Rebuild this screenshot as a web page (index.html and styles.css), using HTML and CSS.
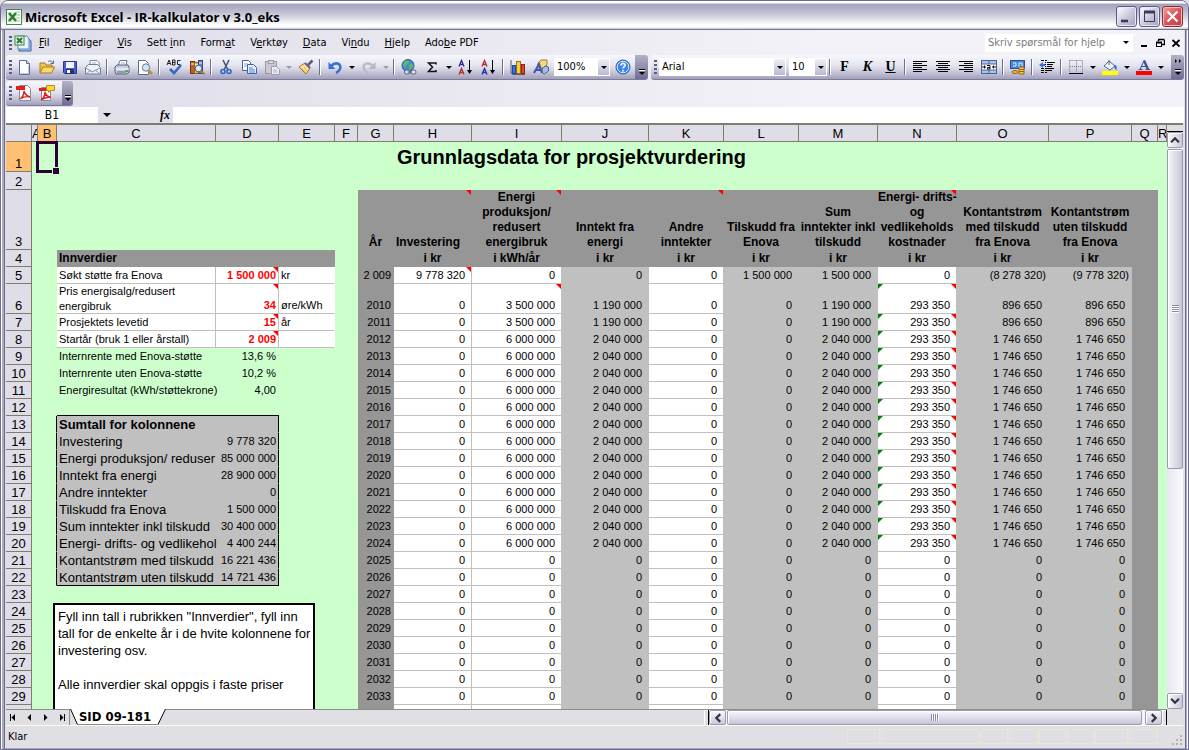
FILE: index.html
```
<!DOCTYPE html>
<html lang="no">
<head>
<meta charset="utf-8">
<title>Microsoft Excel - IR-kalkulator v 3.0_eks</title>
<link rel="stylesheet" href="styles.css">
</head>
<body>
<div class="window">
  <header class="titlebar">
    <svg class="i16" viewBox="0 0 16 16"><rect x=".5" y=".5" width="15" height="15" fill="#fff" stroke="#3b8a3e"/><path d="M10 3h4M10 6h4M10 9h4M10 12h4" stroke="#8cbf8c"/><rect x="2" y="3" width="9" height="10" fill="#d6efd3"/><path d="M3 4l7 8M10 4l-7 8" stroke="#2c7a35" stroke-width="2.4"/></svg>
    <h1 class="title">Microsoft Excel - IR-kalkulator v 3.0_eks</h1>
    <button class="wbtn" aria-label="Minimer"><svg viewBox="0 0 19 19"><path d="M4 14h7" stroke="#fff" stroke-width="4"/><path d="M4 14h7" stroke="#3b3a5c" stroke-width="3"/></svg></button>
    <button class="wbtn" aria-label="Maksimer"><svg viewBox="0 0 19 19"><path d="M4.500 5v9.500h10v-9.500" fill="none" stroke="#3b3a5c"/><path d="M4 5h11" stroke="#3b3a5c" stroke-width="3"/></svg></button>
    <button class="wbtn close" aria-label="Lukk"><svg viewBox="0 0 19 19"><path d="M4.500 4.500l10 10M14.500 4.500l-10 10" stroke="#fff" stroke-width="2.200"/></svg></button>
  </header>

  <nav class="menubar">
    <span class="grip"></span>
    <svg class="docicon" viewBox="0 0 18 18"><path d="M5 4h9l3 3v10H5z" fill="#a9c6ef" stroke="#35639e"/><path d="M4 2h9l2 3v10H4z" fill="#e8f1fd" stroke="#5d8ac4"/><rect x="1" y="2" width="9" height="9" fill="#e1f3dc" stroke="#3b8a3e"/><path d="M3 4l5 5M8 4l-5 5" stroke="#2c7a35" stroke-width="2"/></svg>
    <div class="menus">
      <button><u>F</u>il</button><button><u>R</u>ediger</button><button><u>V</u>is</button><button>Sett <u>i</u>nn</button><button>Form<u>a</u>t</button><button>V<u>e</u>rktøy</button><button><u>D</u>ata</button><button>Vi<u>n</u>du</button><button><u>H</u>jelp</button><button>Ado<u>b</u>e PDF</button>
    </div>
    <div class="ask"><input aria-label="Skriv spørsmål for hjelp" placeholder="Skriv spørsmål for hjelp"><span class="caret"></span></div>
    <div class="docbtns">
      <button aria-label="Minimer bok"><svg viewBox="0 0 10 10"><path d="M2 8h6" stroke="#000" stroke-width="2"/></svg></button>
      <button aria-label="Gjenopprett bok"><svg viewBox="0 0 10 10"><path d="M3 1.500h6.500M3.500 2v1M9.500 2v4.500H7" fill="none" stroke="#000" stroke-width="1.500"/><rect x="1.500" y="4.500" width="5" height="4" fill="none" stroke="#000"/><path d="M1 4.500h6" stroke="#000" stroke-width="2"/></svg></button>
      <button aria-label="Lukk bok"><svg viewBox="0 0 10 10"><path d="M1.500 2l7 6.500M8.500 2l-7 6.500" stroke="#000" stroke-width="1.800"/></svg></button>
    </div>
  </nav>

  <div class="toolrow">
    <div class="toolbar standard">
      <span class="grip"></span>
      <button aria-label="Ny"><svg viewBox="0 0 16 16"><path d="M3.500 1.500h7l3 3v11h-10z" fill="#fff" stroke="#5d6e94"/><path d="M10.500 1.500v3h3" fill="#cfdcf0" stroke="#5d6e94"/><path d="M12.500 6v8.500h-8" fill="none" stroke="#b9cbe9"/></svg></button>
      <button aria-label="Åpne"><svg viewBox="0 0 16 16"><path d="M1 14V4h5l1 2h6v3" fill="#f3c64f" stroke="#a97a1c"/><path d="M1 14l3-6h11.500l-3 6z" fill="#fbd970" stroke="#a97a1c"/><path d="M9 3c2-2 4-1 5 1M14.500 1.500v3h-3" fill="none" stroke="#4669a6"/></svg></button>
      <button aria-label="Lagre"><svg viewBox="0 0 16 16"><path d="M1.500 2.500h13v12h-12l-1-1z" fill="#4b5fd0" stroke="#2a3490"/><rect x="4" y="3" width="8" height="6" fill="#eef3ff"/><rect x="4" y="10" width="8" height="5" fill="#27306f"/><rect x="5" y="11" width="3" height="3" fill="#fff"/></svg></button>
      <button aria-label="E-post"><svg viewBox="0 0 16 16"><path d="M5 9V1.500h7l2 2V9" fill="#fff" stroke="#7b88a6"/><path d="M7 4h4M7 6h5" stroke="#9db1d6"/><path d="M.5 8.500l3-3h9l3 3v6.500H.5z" fill="#eef2f9" stroke="#6f7ea0"/><path d="M1 9l6 4 8-4M1 15l5-4M15 15l-5-4" fill="none" stroke="#8793b1"/></svg></button>
      <i class="sep"></i>
      <button aria-label="Skriv ut"><svg viewBox="0 0 16 16"><path d="M4 7l2-5.500h7L12 7" fill="#fff" stroke="#6a7690"/><path d="M1 8l2-2h11l1 2v5l-2 2H2l-1-2z" fill="#c9d0df" stroke="#55617e"/><path d="M2 10h13" stroke="#fff"/><path d="M3 12h9v2H3z" fill="#8f9bb5"/><rect x="11" y="11" width="3" height="2" fill="#3fbb43"/><path d="M7 4h4" stroke="#9ab0d6"/></svg></button>
      <button aria-label="Forhåndsvis"><svg viewBox="0 0 16 16"><path d="M1.500 1.500h7l3 3v11h-10z" fill="#fff" stroke="#5d6e94"/><circle cx="9" cy="8.500" r="3.700" fill="#cfe5f8" stroke="#68788f"/><path d="M11.500 11.500l3.500 3.500" stroke="#c78b35" stroke-width="2.500"/></svg></button>
      <i class="sep"></i>
      <button aria-label="Stavekontroll"><svg viewBox="0 0 16 16"><path d="M1 6l2-5 2 5M2 4.500h2M6.500 1v5h2.500V1zM6.500 3.500h2.500M14.500 1.500h-3v4h3" fill="none" stroke="#222"/><path d="M4 10l4 4 7-8" fill="none" stroke="#3867c6" stroke-width="2.600"/></svg></button>
      <button aria-label="Oppslag"><svg viewBox="0 0 16 16"><rect x="1.500" y="2.500" width="4" height="12" fill="#c35c31" stroke="#703421"/><rect x="5.500" y="3.500" width="4" height="11" fill="#e7b940" stroke="#8b6714"/><rect x="9.500" y="1.500" width="4" height="13" fill="#6e7fc8" stroke="#34458c"/><path d="M2 5h3M6 6h3M10 4h3" stroke="#fff"/><circle cx="9.500" cy="9.500" r="3.300" fill="#d5edfa" stroke="#4e5f74"/><path d="M12 12l3.500 3.500" stroke="#b3772b" stroke-width="2.200"/></svg></button>
      <i class="sep"></i>
      <button aria-label="Klipp ut"><svg viewBox="0 0 16 16"><path d="M5 1l5 10M11 1L6 11" stroke="#44567e" stroke-width="1.600"/><circle cx="5" cy="12.500" r="2" fill="none" stroke="#2e64c8" stroke-width="1.600"/><circle cx="11" cy="12.500" r="2" fill="none" stroke="#2e64c8" stroke-width="1.600"/></svg></button>
      <button aria-label="Kopier"><svg viewBox="0 0 16 16"><path d="M1.500 1.500h6l2 2v8h-8z" fill="#fff" stroke="#3f64ae"/><path d="M3 5h4M3 7h4" stroke="#85a5dd"/><path d="M6.500 5.500h6l3 3v6h-9z" fill="#e7f0ff" stroke="#3f64ae"/><path d="M8 9h4M8 11h6M8 13h6" stroke="#5482ce"/></svg></button>
      <button aria-label="Lim inn"><svg viewBox="0 0 16 16"><rect x="1.500" y="2.500" width="11" height="12" fill="#c9c9d6" stroke="#9a9aae"/><rect x="4.500" y="1.500" width="5" height="3" fill="#dcdce6" stroke="#9a9aae"/><path d="M7.500 7.500h5l3 3v5h-8z" fill="#eeeef4" stroke="#9a9aae"/><path d="M9 11h4M9 13h5" stroke="#b0b0c2"/></svg></button>
      <span class="drop off"><i class="caret"></i></span>
      <button aria-label="Kopier format"><svg viewBox="0 0 16 16"><path d="M10 6l4.500-4.500" stroke="#56607a" stroke-width="2.500"/><path d="M1 8l6-4 5 5-4 6z" fill="#fbe49a" stroke="#9a7728"/><path d="M7 4l5 5" stroke="#6b5a8c" stroke-width="2"/><path d="M4 9l3 4M6 8l3 4" stroke="#dcb65c"/></svg></button>
      <i class="sep"></i>
      <button aria-label="Angre"><svg viewBox="0 0 16 16"><path d="M4 7c5-5 11-2 9 3-1 2-2 3-4 4" fill="none" stroke="#3a6fd8" stroke-width="2.600"/><path d="M1.500 3v7h7z" fill="#3a6fd8"/></svg></button>
      <span class="drop"><i class="caret"></i></span>
      <button aria-label="Gjør om"><svg viewBox="0 0 16 16"><path d="M12 7c-5-5-11-2-9 3 1 2 2 3 4 4" fill="none" stroke="#b7b7c6" stroke-width="2.200"/><path d="M14.500 3v7h-7z" fill="#b7b7c6"/></svg></button>
      <span class="drop off"><i class="caret"></i></span>
      <i class="sep"></i>
      <button aria-label="Hyperkobling"><svg viewBox="0 0 16 16"><circle cx="7" cy="6.500" r="6" fill="#4c87d8" stroke="#2c5aa0"/><path d="M3 3c2-2 5-2 5 0s-3 2-3 4-3 0-3-1zM9 5c2-1 4 1 3 3l-3 3c-2-1 0-3-1-4z" fill="#55bd54"/><rect x="3.500" y="11" width="5.500" height="4" rx="2" fill="#e6eaf3" stroke="#4d5d7b"/><rect x="9.500" y="11" width="5.500" height="4" rx="2" fill="#e6eaf3" stroke="#4d5d7b"/><path d="M6.500 13h5" stroke="#4d5d7b"/></svg></button>
      <button aria-label="Autosummer"><svg viewBox="0 0 16 16"><path d="M12 5.500V4H4.500L8.500 8l-4 4.500H12V11" fill="none" stroke="#111" stroke-width="1.500"/></svg></button>
      <span class="drop"><i class="caret"></i></span>
      <button aria-label="Sorter stigende"><svg viewBox="0 0 16 16"><path d="M1 7.500l2.500-6L6 7.500M2 5.500h3" fill="none" stroke="#2b2ba3" stroke-width="1.300"/><path d="M1 15.500l2.500-6L6 15.500M2 13.500h3" fill="none" stroke="#b22d2d" stroke-width="1.300"/><path d="M11.500 1v13" stroke="#000"/><path d="M9 11h5l-2.500 4z"/></svg></button>
      <button aria-label="Sorter synkende"><svg viewBox="0 0 16 16"><path d="M1 7.500l2.500-6L6 7.500M2 5.500h3" fill="none" stroke="#b22d2d" stroke-width="1.300"/><path d="M1 15.500l2.500-6L6 15.500M2 13.500h3" fill="none" stroke="#2b2ba3" stroke-width="1.300"/><path d="M11.500 1v13" stroke="#000"/><path d="M9 11h5l-2.500 4z"/></svg></button>
      <i class="sep"></i>
      <button aria-label="Diagramveiviser"><svg viewBox="0 0 16 16"><path d="M1 1v13l2 1.500h12" fill="none" stroke="#4a5a80"/><rect x="2.500" y="6.500" width="3" height="8" fill="#3c78dc" stroke="#1d4796"/><rect x="6.500" y="2.500" width="4" height="12" fill="#f8cb3f" stroke="#9a7110"/><rect x="11.500" y="5.500" width="3" height="9" fill="#e2482c" stroke="#8d2413"/></svg></button>
      <button aria-label="Tegning"><svg viewBox="0 0 16 16"><path d="M5 4l3-3h6v5l-3 3H5z" fill="#f4d77c" stroke="#a3822f"/><path d="M1 14l5-9 3 9M3 11h5" fill="none" stroke="#3e55b5" stroke-width="2"/><path d="M9 10l3-3 3.500 1v4l-4 3-2-1z" fill="#a9bbdf" stroke="#4e6191"/></svg></button>
      <div class="combo zoom"><select aria-label="Zoom"><option>100%</option></select><span class="cbtn"><i class="caret"></i></span></div>
      <button aria-label="Hjelp"><svg viewBox="0 0 16 16"><circle cx="8" cy="8" r="7" fill="#3c86e8" stroke="#2b5fb0"/><circle cx="8" cy="8" r="5.800" fill="none" stroke="#d9eafd"/><path d="M6 6.500c0-3 4.500-2.500 4 0-.3 1.300-2 1.300-2 3M8 11v1.500" fill="none" stroke="#fff" stroke-width="1.700"/></svg></button>
      <span class="tail"><i class="bar"></i><i class="caret"></i></span>
    </div>
    <div class="toolbar format">
      <span class="grip"></span>
      <div class="combo face"><select aria-label="Skrift"><option>Arial</option></select><span class="cbtn"><i class="caret"></i></span></div>
      <div class="combo size"><select aria-label="Skriftstørrelse"><option>10</option></select><span class="cbtn"><i class="caret"></i></span></div>
      <i class="sep"></i>
      <button class="glyph">F</button><button class="glyph ital">K</button><button class="glyph und">U</button>
      <i class="sep"></i>
      <button aria-label="Venstrejuster"><svg viewBox="0 0 16 16"><path d="M1 2.500h14M1 4.500h9M1 6.500h14M1 8.500h9M1 10.500h14M1 12.500h9" stroke="#000"/></svg></button>
      <button aria-label="Midtstill"><svg viewBox="0 0 16 16"><path d="M1 2.500h14M3 4.500h10M1 6.500h14M3 8.500h10M1 10.500h14M3 12.500h10" stroke="#000"/></svg></button>
      <button aria-label="Høyrejuster"><svg viewBox="0 0 16 16"><path d="M1 2.500h14M6 4.500h9M1 6.500h14M6 8.500h9M1 10.500h14M6 12.500h9" stroke="#000"/></svg></button>
      <button aria-label="Slå sammen og midtstill"><svg viewBox="0 0 16 16"><rect x=".5" y="1.500" width="15" height="13" fill="#a9c5ee" stroke="#4b6491"/><rect x="1" y="5" width="14" height="6" fill="#fff"/><path d="M8 2v3M8 11v3M1 5h14M1 11h14" stroke="#4b6491"/><path d="M1 8h4M11 8h4M3.500 6.500v3M12.500 6.500v3M6 6.500h3v3.500H6.500V8.500H9" fill="none" stroke="#111"/></svg></button>
      <i class="sep"></i>
      <button aria-label="Valuta"><svg viewBox="0 0 16 16"><rect x=".5" y="1.500" width="14" height="8" fill="#4a86d9" stroke="#28508d"/><path d="M3 4h3v3H3M9 4v4M9 4h3v3" fill="none" stroke="#dcebff"/><ellipse cx="5" cy="13" rx="3" ry="1.500" fill="#f1b83a" stroke="#96690f"/><path d="M9 8h5v7H9z" fill="#f8ca4c" stroke="#96690f"/><path d="M9 10.500h5M9 12.500h5" stroke="#96690f"/></svg></button>
      <i class="sep"></i>
      <button aria-label="Reduser innrykk"><svg viewBox="0 0 16 16"><path d="M2 1.500h3M7 1.500h1M8 3.500h8M8 5.500h6M8 7.500h5M2 9.500h3M7 9.500h8M2 11.500h3M7 11.500h6M2 13.500h3M7 13.500h1" stroke="#000"/><path d="M6.500 1v14" stroke="#000" stroke-dasharray="1 1"/><path d="M4 3v6L0 6z" fill="#3a6fd8"/><path d="M3 6h3" stroke="#3a6fd8" stroke-width="2"/></svg></button>
      <i class="sep"></i>
      <button aria-label="Kantlinjer"><svg viewBox="0 0 16 16"><path d="M1.500 1.500h13v12M1.500 1.500v12M8.500 1.500v12M2 7.500h12" fill="none" stroke="#777790" stroke-dasharray="1 1"/><path d="M1 14.500h14" stroke="#000"/></svg></button>
      <span class="drop"><i class="caret"></i></span>
      <button aria-label="Fyllfarge"><svg viewBox="0 0 16 16"><path d="M7 2l6 5-5 4-6-4z" fill="#eef3fb" stroke="#526789"/><path d="M7 6V1" stroke="#526789"/><path d="M12 6c3 0 3 2 2.500 5-1 0-1.500-2-2.500-3z" fill="#2f72d6"/><path d="M0 12h16v4H0z" fill="#ffff00"/></svg></button>
      <span class="drop"><i class="caret"></i></span>
      <button aria-label="Skriftfarge"><svg viewBox="0 0 16 16"><path d="M4 10.500l4-9" stroke="#3a5291"/><path d="M8 1.500l4 9" stroke="#3a5291" stroke-width="2.400"/><path d="M5 7.500h5M2.500 10.500h4M9.500 10.500h4.500" stroke="#3a5291"/><path d="M0 12h16v4H0z" fill="#ff0000"/></svg></button>
      <span class="drop"><i class="caret"></i></span>
      <span class="tail end"><svg class="more" viewBox="0 0 8 5"><path d="M1 0l2 2-2 2zM5 0l2 2-2 2z"/></svg><i class="bar"></i><i class="caret"></i></span>
    </div>
  </div>

  <div class="toolrow">
    <div class="toolbar pdf">
      <span class="grip"></span>
      <button aria-label="Konverter til PDF"><svg viewBox="0 0 16 16"><path d="M3.500.5h8l3 3v12h-11z" fill="#fff" stroke="#8a8aa0"/><rect x="0" y="1" width="9" height="4" fill="#e02020"/><path d="M4 14c3-2 4-5 4-8 1 4 3 5 6 6-4-1-7 0-10 2z" fill="none" stroke="#e02020" stroke-width="1.400"/></svg></button>
      <button aria-label="PDF til gjennomsyn"><svg viewBox="0 0 16 16"><path d="M2.500 2.500h9v13h-9z" fill="#fff" stroke="#8a8aa0"/><rect x="0" y="3" width="8" height="3" fill="#e02020"/><path d="M2 15c3-2 4-5 4-8 1 4 3 5 6 5-4 0-7 1-10 3z" fill="none" stroke="#e02020" stroke-width="1.500"/><path d="M7.500 .5h8v5h-4l-2 2v-2h-2z" fill="#ffd62e" stroke="#b58e10"/></svg></button>
      <span class="tail"><i class="bar"></i><i class="caret"></i></span>
    </div>
  </div>

  <div class="formula">
    <input class="namebox" aria-label="Navneboks" value="B1">
    <span class="drop namedrop"><i class="caret big"></i></span>
    <button class="fx" aria-label="Sett inn funksjon">fx</button>
    <input class="fbar" aria-label="Formellinje">
  </div>

  <main class="work">
    <div class="sheet">
      <table class="grid" id="grid"></table>
      <div class="cursor"></div>
      <div class="note">Fyll inn tall i rubrikken "Innverdier", fyll inn<br>tall for de enkelte år i de hvite kolonnene for<br>investering osv.<br><br>Alle innverdier skal oppgis i faste priser</div>
    </div>
    <div class="vscroll">
      <span class="split"></span>
      <button aria-label="Rull opp"><svg viewBox="0 0 9 9"><path d="M1 6.500L4.500 3 8 6.500" /></svg></button>
      <span class="thumb"><i></i></span>
      <span class="rest"></span>
      <button aria-label="Rull ned"><svg viewBox="0 0 9 9"><path d="M1 2.500L4.500 6 8 2.500" /></svg></button>
    </div>
  </main>

  <div class="bottom">
    <div class="tabs">
      <div class="tabnav">
        <button aria-label="Første ark"><svg viewBox="0 0 9 9"><path d="M6 1v7L2.500 4.500zM1 1h1v7H1z"/></svg></button>
        <button aria-label="Forrige ark"><svg viewBox="0 0 9 9"><path d="M6 1v7L2.500 4.500z"/></svg></button>
        <button aria-label="Neste ark"><svg viewBox="0 0 9 9"><path d="M3 1v7l3.500-3.500z"/></svg></button>
        <button aria-label="Siste ark"><svg viewBox="0 0 9 9"><path d="M3 1v7l3.500-3.500zM7 1h1v7H7z"/></svg></button>
      </div>
      <button class="tab"><svg viewBox="0 0 96 16" preserveAspectRatio="none"><path d="M0 0l7 15.500h81L96 0z" fill="#fff"/><path d="M.5 0l7 15.500M88 15.500L95.500 0" fill="none" stroke="#000"/><path d="M7.500 15.500h80.500" stroke="#8c8c8c"/></svg><span>SID 09-181</span></button>
      <span class="tabline"></span>
    </div>
    <div class="hscroll">
      <span class="split"></span>
      <button aria-label="Rull til venstre"><svg viewBox="0 0 9 9"><path d="M6.500 1L3 4.500 6.500 8"/></svg></button>
      <span class="thumb"><i></i></span>
      <button aria-label="Rull til høyre"><svg viewBox="0 0 9 9"><path d="M2.500 1L6 4.500 2.500 8"/></svg></button>
      <span class="split"></span>
    </div>
    <span class="corner"></span>
  </div>

  <footer class="status">
    <span class="ready">Klar</span>
    <i class="w34"></i><i class="w98"></i><i class="w26"></i><i class="w30"></i><i class="w26"></i><i class="w26"></i><i class="w34"></i><i class="w30"></i>
    <svg class="resize" viewBox="0 0 12 12"><path d="M9 1h2v2H9zM5 5h2v2H5zM9 5h2v2H9zM1 9h2v2H1zM5 9h2v2H5zM9 9h2v2H9z" fill="#b8b49c"/></svg>
  </footer>
</div>
<script src="script.js"></script>
</body>
</html>
```
FILE: styles.css
```
* { box-sizing: border-box; }
body {
  margin: 0;
  font: 11px/14px "DejaVu Sans Condensed", "Noto Sans", sans-serif;
  color: #000;
  background: #e0dfe3;
}
button, input, select { font: inherit; color: inherit; padding: 0; margin: 0; border: 0; background: none; border-radius: 0; }
input, select { outline: 0; min-width: 0; }
u { text-underline-offset: 1px; }

.window {
  height: 100vh;
  display: flex;
  flex-direction: column;
  overflow: hidden;
  padding: 0 4px 2px 5px;
  border: 1px solid #6b6a8d;
  border-radius: 8px 8px 0 0;
  box-shadow: inset 1px 0 #fff, inset 3px 0 #a9a9c4, inset 4px 0 #6b6a8d, inset -1px 0 #fff, inset -2px 0 #a9a9c4, inset -3px 0 #6b6a8d, inset 0 -1px #a9a9c4;
}

/* title bar */
.titlebar {
  flex: none;
  height: 29px;
  margin: 0 -4px 0 -5px;
  padding: 3px 5px 0 5px;
  display: flex;
  align-items: center;
  gap: 2px;
  border-bottom: 1px solid #74768f;
  background: linear-gradient(#fff 0 2px, #a5a4c0 3px, #b6b6cb 9px, #d3d5df 16px, #fff 24px, #fff 26px, #c2c2d0 28px);
}
.i16 { width: 16px; height: 16px; }
.title { flex: 1; margin: 0 0 0 1px; font: bold 13px/16px "Open Sans", "Noto Sans", sans-serif; white-space: nowrap; }
.wbtn {
  width: 21px; height: 21px;
  border: 1px solid #5c5b85;
  border-radius: 3px;
  background: linear-gradient(135deg, #fff, #c3c2d6 60%, #a3a2be);
  box-shadow: inset 0 0 0 1px #e8e8f2;
}
.wbtn svg { display: block; width: 19px; height: 19px; }
.wbtn.close { border-color: #8f2d33; background: linear-gradient(135deg, #f0a3a0, #d9545a 50%, #c23c45); box-shadow: inset 0 0 0 1px #f1b9b9; }

/* menu bar */
.menubar, .toolrow, .formula { background: linear-gradient(90deg, #dedde8, #f3f2f8 70%); }
.menubar { flex: none; height: 25px; display: flex; align-items: center; padding-left: 3px; }
.grip { flex: none; width: 3px; height: 14px; background: repeating-linear-gradient(#5c5b85 0 2px, transparent 2px 4px); }
.docicon { width: 18px; height: 18px; margin: 0 7px 0 2px; }
.menus { flex: 1; display: flex; gap: 15px; white-space: nowrap; }
.ask { display: flex; align-items: center; width: 148px; height: 18px; background: #fff; }
.ask input { flex: 1; padding-left: 3px; background: #fff; }
.ask input::placeholder { color: #7c7c7c; opacity: 1; }
.ask .caret { margin-right: 4px; }
.docbtns { display: flex; gap: 6px; margin: 0 3px 0 6px; }
.docbtns button { width: 10px; height: 10px; }
.docbtns svg { display: block; width: 10px; height: 10px; }
.caret { display: block; flex: none; width: 0; height: 0; border: 3px solid transparent; border-top-color: #000; border-bottom: 0; }
.caret.big { border-width: 4px 4px 0; }

/* toolbars */
.toolrow { flex: none; height: 26px; display: flex; gap: 3px; align-items: flex-start; }
.toolbar {
  height: 25px;
  display: flex;
  align-items: center;
  padding-left: 3px;
  border-radius: 3px;
  border-bottom: 1px solid #7c7b9c;
  background: linear-gradient(#f7f7fd, #e4e4ef 45%, #c9c8da 70%, #a09fba);
}
.toolbar > button { flex: none; width: 23px; height: 23px; display: grid; place-items: center; }
.toolbar > button svg { width: 16px; height: 16px; }
.format { flex: 1; }
.sep { flex: none; width: 2px; height: 16px; margin: 0 2px; border-left: 1px solid #6e6d8f; border-right: 1px solid #fff; }
.drop { flex: none; width: 11px; display: grid; place-items: center; }
.off .caret { border-top-color: #9a9aac; }
.combo { flex: none; display: flex; height: 18px; margin-right: 3px; padding: 1px; background: #fff; }
.combo select { flex: 1; appearance: none; padding-left: 2px; background: #fff; }
.cbtn { flex: none; width: 11px; display: grid; place-items: center; background: linear-gradient(#f0f0f7, #b9b8cf); }
.zoom { width: 56px; margin: 0 1px 0 2px; }
.face { width: 127px; margin-left: 2px; }
.size { width: 38px; margin-right: 0; }
.glyph { font: bold 14px/20px "Liberation Serif", serif; }
.ital { font-style: italic; }
.und { text-decoration: underline; }
.tail {
  align-self: stretch;
  margin-left: 1px;
  width: 13px;
  display: flex;
  flex-direction: column;
  align-items: center;
  justify-content: flex-end;
  gap: 1px;
  padding-bottom: 4px;
  border-radius: 0 3px 3px 0;
  background: linear-gradient(#b3b2c8, #6f6e92);
}
.bar { width: 6px; height: 2px; background: #000; border-bottom: 1px solid #fff; }
.tail.end { margin-left: auto; }
.more { width: 8px; height: 5px; margin-bottom: 4px; }
.pdf .tail { margin-left: 4px; width: 11px; }

/* formula bar */
.formula { flex: none; display: flex; height: 16px; }
.namebox { width: 92px; text-align: center; background: #fff; font-size: 12px; }
.namedrop { width: 18px; }
.fx { width: 57px; padding-left: 44px; text-align: left; font: italic bold 12px/16px "Liberation Serif", serif; }
.fbar { flex: 1; background: #fff; }

/* worksheet */
.work { flex: 1; min-height: 0; display: flex; border-top: 2px solid #7f7e6c; margin-right: 1px; background: #cfc; }
.sheet { flex: 1; min-width: 0; position: relative; overflow: hidden; font-family: "Liberation Sans", Arial, sans-serif; background: #cfc; }
.grid { table-layout: fixed; border-collapse: separate; border-spacing: 0; width: 1161px; }
.grid th, .grid td {
  height: 17px;
  padding: 0 2px;
  border: 0 solid #c0c0c0;
  border-width: 0 1px 1px 0;
  white-space: nowrap;
  vertical-align: bottom;
  line-height: 15px;
}
.grid th { padding: 0; font-weight: normal; font-size: 13px; text-align: center; background: #dfdee8; border-color: #7f7e6c; }
.grid th.on { background: #ffc073; }
.grid th.narrow { overflow: hidden; }
.grid .tall { height: 30px; }
.grid .r2 { height: 18px; }
.grid .r3 { height: 60px; }
.grid td { font-size: 11px; }
.grid .g { background: #cfc; border-color: #cfc; }
.grid .d { background: #969696; border-color: #969696; }
.grid .l { background: #c0c0c0; }
.grid .w { background: #fff; }
.grid .n { text-align: right; padding-right: 6px; }
.grid .tight { padding-right: 2px; }
.grid .paren { padding-right: 2px; }
.grid .red { color: #f00; font-weight: bold; }
.grid .h { font-size: 12px; font-weight: bold; text-align: center; padding: 0; }
.grid .h.left { text-align: left; padding-left: 2px; }
.grid .lines { border-bottom: 0; }
.grid .w.lines { box-shadow: inset 0 -1px #c0c0c0; }
.grid .lab { font-size: 13px; }
.grid .bold { font-weight: bold; }
.grid .big { font-size: 20px; line-height: 24px; font-weight: bold; padding: 0 0 0 3px; vertical-align: middle; }
.grid .wr { border-right-color: #fff; }
.grid .bb { border-bottom-color: #000; }
.grid .br { border-right-color: #000; }
.grid .nr { border-right-width: 0; }
.grid .c, .grid .e { position: relative; }
.c::after, .e::before { content: ""; position: absolute; top: 0; width: 5px; height: 5px; }
.c::after { right: 0; background: #f00; clip-path: polygon(0 0, 100% 0, 100% 100%); }
.e::before { left: 0; background: #008000; clip-path: polygon(0 0, 100% 0, 0 100%); }
.cursor { position: absolute; left: 30px; top: 16px; width: 22px; height: 32px; border: 3px solid #2b0038; }
.cursor::after { content: ""; position: absolute; right: -4px; bottom: -4px; width: 6px; height: 6px; background: #2b0038; border: solid #cfc; border-width: 1px 0 0 1px; }
.note { position: absolute; left: 47px; top: 478px; width: 262px; height: 140px; padding: 3px; border: 2px solid #000; background: #fff; font-size: 13px; line-height: 17px; white-space: nowrap; }

/* scroll bars */
.vscroll { flex: none; width: 16px; display: flex; flex-direction: column; background: linear-gradient(90deg, #e6e6f0, #fbfbff); }
.vscroll button, .hscroll button, .thumb { border: 1px solid #9a9ab0; border-radius: 2px; box-shadow: inset 1px 1px #fff; }
.vscroll button { flex: none; height: 16px; display: grid; place-items: center; background: linear-gradient(90deg, #f8f8fd, #c9c8da); }
.vscroll svg, .hscroll svg { width: 10px; height: 10px; fill: none; stroke: #33323f; stroke-width: 2; }
.vscroll .split { flex: none; height: 7px; border-bottom: 1px solid #000; background: #e0dfe3; }
.vscroll .thumb { flex: 320; margin-top: 1px; display: grid; place-items: center; background: linear-gradient(90deg, #f6f6fc, #c6c5d9); }
.vscroll .thumb i { width: 7px; height: 8px; background: repeating-linear-gradient(#8b8aa4 0 1px, #fff 1px 2px); }
.rest { flex: 225; }

.bottom { flex: none; height: 17px; display: flex; margin-right: 1px; background: #e0dfe3; border-bottom: 1px solid #fbfbf0; }
.tabs { flex: 700; min-width: 0; display: flex; }
.tabnav { flex: none; display: flex; align-items: center; width: 64px; border-top: 1px solid #8c8c8c; border-right: 1px solid #8c8c8c; }
.tabnav button { width: 16px; height: 14px; display: grid; place-items: center; }
.tabnav svg { width: 9px; height: 9px; }
.tab { flex: none; width: 96px; display: grid; }
.tab svg, .tab span { grid-area: 1 / 1; }
.tab svg { width: 96px; height: 16px; }
.tab span { font-weight: bold; line-height: 16px; text-align: center; padding-right: 6px; font-size: 13px; }
.tabline { flex: 1; border-top: 1px solid #8c8c8c; }
.hscroll { flex: 464; display: flex; border-top: 1px solid #8c8c8c; background: #f4f4fa; }
.hscroll .split { flex: none; width: 5px; border-right: 1px solid #000; background: #e0dfe3; box-shadow: inset 1px 1px #fff; }
.hscroll button { flex: none; width: 17px; display: grid; place-items: center; background: linear-gradient(#f8f8fd, #c9c8da); }
.hscroll .thumb { flex: 1; margin: 0 3px 0 1px; display: grid; place-items: center; background: linear-gradient(#f6f6fc, #e0dfeb 50%, #c6c5d9); }
.hscroll .thumb i { width: 8px; height: 7px; background: repeating-linear-gradient(90deg, #8b8aa4 0 1px, #fff 1px 2px); }
.corner { flex: none; width: 16px; }

.status { flex: none; height: 21px; display: flex; gap: 1px; align-items: center; background: #e0dfe3; }
.ready { flex: 1; padding-left: 2px; }
.status i { flex: none; height: 15px; border: 1px solid #ebe8d0; }
.w26 { width: 27px; }
.w30 { width: 29px; }
.w34 { width: 33px; }
.w98 { width: 99px; }
.resize { flex: none; width: 12px; height: 12px; margin: 6px 1px 0 12px; }
```
FILE: script.js
```
const widths = [26, 6, 19, 159, 63, 56, 23, 36, 78, 90, 87, 75, 75, 79, 79, 92, 83, 26, 9];
const letters = "ABCDEFGHIJKLMNOPQR".split("");

const inputs = {
  5: ["Søkt støtte fra Enova", "1 500 000", "kr"],
  6: ["Pris energisalg/redusert<br>energibruk", "34", "øre/kWh"],
  7: ["Prosjektets levetid", "15", "år"],
  8: ["Startår (bruk 1 eller årstall)", "2 009", ""]
};
const results = {
  9: ["Internrente med Enova-støtte", "13,6 %"],
  10: ["Internrente uten Enova-støtte", "10,2 %"],
  11: ["Energiresultat (kWh/støttekrone)", "4,00"]
};
const sums = {
  14: ["Investering", "9 778 320"],
  15: ["Energi produksjon/ reduser", "85 000 000"],
  16: ["Inntekt fra energi", "28 900 000"],
  17: ["Andre inntekter", "0"],
  18: ["Tilskudd fra Enova", "1 500 000"],
  19: ["Sum inntekter inkl tilskudd", "30 400 000"],
  20: ["Energi- drifts- og vedlikehol", "4 400 244"],
  21: ["Kontantstrøm med tilskudd", "16 221 436"],
  22: ["Kontantstrøm uten tilskudd", "14 721 436"]
};
const heads = [
  ["År", ""], ["Investering", "c left"], ["Energi<br>produksjon/<br>redusert<br>energibruk", "c"],
  ["Inntekt fra<br>energi", ""], ["Andre<br>inntekter", "c"], ["Tilskudd fra<br>Enova", ""],
  ["Sum<br>inntekter inkl<br>tilskudd", ""], ["Energi- drifts-<br>og<br>vedlikeholds<br>kostnader", "c"],
  ["Kontantstrøm<br>med tilskudd<br>fra Enova", ""], ["Kontantstrøm<br>uten tilskudd<br>fra Enova", ""]
];
const units = ["", "i kr", "i kWh/år", "i kr", "i kr", "i kr", "i kr", "i kr", "i kr", "i kr"];

const td = (cls, text = "") => `<td class="${cls}">${text}</td>`;

function left(r) {
  if (r === 4) return td("d h left", "Innverdier") + td("d") + td("d");
  if (inputs[r]) {
    const [a, b, c] = inputs[r];
    return td(r === 6 ? "w lines" : "w", a) + td("w n tight red c", b) + td("w wr", c);
  }
  if (results[r]) return td("g", results[r][0]) + td("g n tight", results[r][1]) + td("g");
  if (r === 12) return td("g bb nr") + td("g bb nr") + td("g");
  if (r === 13) return td("l lab bold", "Sumtall for kolonnene") + td("l br") + td("g");
  if (sums[r]) {
    const last = r === 22 ? " bb" : "";
    return td("l nr lab" + last, sums[r][0]) + td("l n tight br" + last, sums[r][1]) + td("g");
  }
  return td("g") + td("g") + td("g");
}

function right(r) {
  if (r === 3) return heads.map(h => td("d h lines " + h[1], h[0])).join("") + td("d");
  if (r === 4) return units.map(u => td("d h", u)).join("") + td("d");
  let v;
  if (r === 5) v = ["2 009", "9 778 320", "0", "0", "0", "1 500 000", "1 500 000", "0", "(8 278 320)", "(9 778 320)"];
  else if (r < 8) v = ["0", "3 500 000", "1 190 000", "0", "0", "1 190 000", "293 350", "896 650", "896 650"];
  else if (r < 21) v = ["0", "6 000 000", "2 040 000", "0", "0", "2 040 000", "293 350", "1 746 650", "1 746 650"];
  else v = Array(9).fill("0");
  if (r > 5) v.unshift(String(2004 + r));
  const marked = r > 5 && r < 21;
  const cls = ["d n tight", "w n", "w n", "l n", "w n", "l n", "l n", "w n", "l n", "l n"];
  if (r === 5) { cls[1] += " c"; cls[8] += " paren"; cls[9] += " paren"; }
  if (r === 6) cls[2] += " c";
  if (marked) cls[7] += " c e";
  return v.map((t, i) => td(cls[i], t)).join("") + td("d");
}

const headClass = { A: "narrow", B: "on", R: "narrow" };
let html = "<colgroup>" + widths.map(w => `<col style="width:${w}px">`).join("") + "</colgroup>";
html += "<tr><th></th>" + letters.map(l => `<th class="${headClass[l] || ""}">${l}</th>`).join("") + "</tr>";
for (let r = 1; r <= 30; r++) {
  const size = r === 1 || r === 6 ? "tall" : r === 2 ? "r2" : r === 3 ? "r3" : "";
  let row = `<th class="${size}${r === 1 ? " on" : ""}">${r}</th>` + td("g") + td(r > 12 && r < 23 ? "g br" : "g");
  if (r === 1) row += td("g").repeat(5) + '<td class="g big" colspan="7">Grunnlagsdata for prosjektvurdering</td>' + td("g").repeat(4);
  else if (r === 2) row += td("g").repeat(16);
  else row += left(r) + td("g") + right(r) + td("g");
  html += `<tr>${row}</tr>`;
}
document.getElementById("grid").innerHTML = html;
```
